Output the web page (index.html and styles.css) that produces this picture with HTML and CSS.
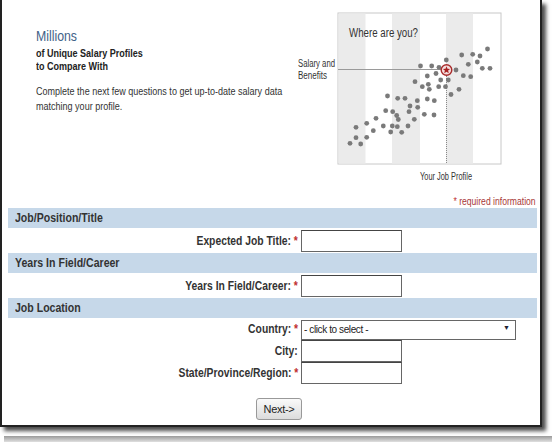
FILE: index.html
```html
<!doctype html>
<html lang="en">
<head>
    <meta charset="UTF-8" />
    <title>Salary Profile</title>
    <link rel="stylesheet" href="styles.css">
</head>
<body>
    <div class="panel">
        <div class="top">
            <div class="intro">
                <div class="intro-inner">
                    <div class="intro-title">Millions</div>
                    <div class="intro-sub">of Unique Salary Profiles<br>to Compare With</div>
                    <p class="intro-text">Complete the next few questions to get up-to-date salary data matching your profile.</p>
                </div>
            </div>
            <svg class="chart" width="220" height="190" viewBox="290 0 220 190">
                <rect x="338" y="13" width="163" height="151" fill="#fff" stroke="#c8c8c8" />
                <rect x="338.5" y="13.5" width="27" height="150" fill="#ebebeb" />
                <rect x="392" y="13.5" width="28" height="150" fill="#ebebeb" />
                <rect x="446" y="13.5" width="27" height="150" fill="#ebebeb" />
                <text x="349" y="37" class="chart-title" textLength="69" lengthAdjust="spacingAndGlyphs">Where are you?</text>
                <text x="298" y="67" class="chart-label" textLength="37" lengthAdjust="spacingAndGlyphs">Salary and</text>
                <text x="298" y="79" class="chart-label" textLength="29" lengthAdjust="spacingAndGlyphs">Benefits</text>
                <text x="420" y="180" class="chart-label" textLength="52" lengthAdjust="spacingAndGlyphs">Your Job Profile</text>
                <line x1="338" y1="69.5" x2="441" y2="69.5" stroke="#9a9a9a" stroke-width="1" />
                <line x1="446.5" y1="76" x2="446.5" y2="164" stroke="#888" stroke-width="1" stroke-dasharray="1 1" />
                <g fill="#7a7a7a">
                    <circle cx="487.5" cy="49" r="2.4" /><circle cx="472.7" cy="54.3" r="2.4" />
                    <circle cx="480" cy="56" r="2.4" /><circle cx="461.7" cy="55" r="2.4" />
                    <circle cx="477.3" cy="62" r="2.4" /><circle cx="468.3" cy="64.3" r="2.4" />
                    <circle cx="420.5" cy="66" r="2.4" /><circle cx="431.7" cy="66" r="2.4" />
                    <circle cx="439" cy="67.3" r="2.4" /><circle cx="446.3" cy="60" r="2.4" />
                    <circle cx="456" cy="70" r="2.4" /><circle cx="482.3" cy="68.3" r="2.4" />
                    <circle cx="490" cy="68.3" r="2.4" /><circle cx="427.3" cy="76" r="2.4" />
                    <circle cx="436" cy="73.5" r="2.4" /><circle cx="463.3" cy="75.7" r="2.4" />
                    <circle cx="470.7" cy="76.7" r="2.4" /><circle cx="440.7" cy="80" r="2.4" />
                    <circle cx="448.3" cy="80" r="2.4" /><circle cx="415" cy="81.7" r="2.4" />
                    <circle cx="422.3" cy="86.7" r="2.4" /><circle cx="428.3" cy="84.3" r="2.4" />
                    <circle cx="429.3" cy="89.3" r="2.4" /><circle cx="438.7" cy="86.7" r="2.4" />
                    <circle cx="445.5" cy="86.7" r="2.4" /><circle cx="459" cy="89.3" r="2.4" />
                    <circle cx="451" cy="94.5" r="2.4" /><circle cx="387.5" cy="96" r="2.4" />
                    <circle cx="397.7" cy="98.3" r="2.4" /><circle cx="405" cy="98.3" r="2.4" />
                    <circle cx="417.3" cy="100.7" r="2.4" /><circle cx="427.3" cy="99" r="2.4" />
                    <circle cx="434.3" cy="100.7" r="2.4" /><circle cx="410" cy="106" r="2.4" />
                    <circle cx="417.7" cy="107.3" r="2.4" /><circle cx="385.7" cy="110.7" r="2.4" />
                    <circle cx="392.7" cy="111.7" r="2.4" /><circle cx="409" cy="111.7" r="2.4" />
                    <circle cx="396.7" cy="115.5" r="2.4" /><circle cx="424.3" cy="114.3" r="2.4" />
                    <circle cx="434" cy="115" r="2.4" /><circle cx="376" cy="118.3" r="2.4" />
                    <circle cx="398.3" cy="119.5" r="2.4" /><circle cx="414.3" cy="119.3" r="2.4" />
                    <circle cx="366.7" cy="123.3" r="2.4" /><circle cx="356" cy="127.3" r="2.4" />
                    <circle cx="383.3" cy="126" r="2.4" /><circle cx="392.3" cy="126" r="2.4" />
                    <circle cx="397.3" cy="126.7" r="2.4" /><circle cx="408" cy="126" r="2.4" />
                    <circle cx="373.3" cy="130.7" r="2.4" /><circle cx="390.7" cy="132" r="2.4" />
                    <circle cx="401.7" cy="132.3" r="2.4" /><circle cx="356" cy="137.7" r="2.4" />
                    <circle cx="366.7" cy="137.3" r="2.4" /><circle cx="350" cy="143.3" r="2.4" />
                    <circle cx="360.7" cy="144" r="2.4" />
                </g>
                <circle cx="446.5" cy="70" r="5.3" fill="#f3dcdc" stroke="#a82a2a" stroke-width="1.4" />
                <polygon points="446.5,66.2 447.5,68.8 450.1,68.9 448.1,70.6 448.8,73.2 446.5,71.7 444.2,73.2 444.9,70.6 442.9,68.9 445.5,68.8" fill="#a82020" />
            </svg>
        </div>

        <div class="required"><span class="squeeze-r"><span class="star">*</span> required information</span></div>

        <div class="section-head"><span class="squeeze-l">Job/Position/Title</span></div>
        <div class="row">
            <label class="field-label"><span class="squeeze-r">Expected Job Title: <span class="star">*</span></span></label>
            <input type="text" class="text-input">
        </div>

        <div class="section-head"><span class="squeeze-l">Years In Field/Career</span></div>
        <div class="row">
            <label class="field-label"><span class="squeeze-r">Years In Field/Career: <span class="star">*</span></span></label>
            <input type="text" class="text-input">
        </div>

        <div class="section-head"><span class="squeeze-l">Job Location</span></div>
        <div class="row row-tight">
            <label class="field-label"><span class="squeeze-r">Country: <span class="star">*</span></span></label>
            <div class="select-wrap">
                <select class="select-input">
                    <option>- click to select -</option>
                </select>
                <span class="select-arrow">&#9660;</span>
            </div>
        </div>
        <div class="row row-tight">
            <label class="field-label"><span class="squeeze-r">City:</span></label>
            <input type="text" class="text-input">
        </div>
        <div class="row row-tight">
            <label class="field-label"><span class="squeeze-r">State/Province/Region: <span class="star">*</span></span></label>
            <input type="text" class="text-input">
        </div>

        <div class="actions">
            <button class="next-btn">Next-&gt;</button>
        </div>
    </div>
    <div class="reflection"></div>
</body>
</html>
```

FILE: styles.css
```css
html {
    background: #fff;
}
body {
    margin: 0;
    font-family: "Liberation Sans", Arial, sans-serif;
    color: #333;
}
.panel {
    width: 538px;
    height: 425px;
    border: 0 solid #222;
    border-width: 0 2px 2px 2px;
    background: #fff;
    box-shadow: 4px 4px 4px rgba(0, 0, 0, 0.7);
}
.top {
    display: flex;
    height: 195px;
}
.intro {
    flex: 0 0 254px;
    min-width: 0;
    padding-left: 34px;
}
.intro-inner {
    width: 312px;
    padding-top: 27px;
    transform: scaleX(0.82);
    transform-origin: left top;
}
.intro-title {
    font-size: 15px;
    line-height: 17px;
    color: #3f6288;
}
.intro-sub {
    font-size: 11px;
    font-weight: bold;
    line-height: 13px;
    color: #222;
    margin-top: 3px;
}
.intro-text {
    font-size: 11px;
    line-height: 15px;
    color: #333;
    margin: 11px 0 0 0;
}
.chart {
    display: block;
    flex: 0 0 220px;
}
.chart-title {
    font-size: 12px;
    fill: #333;
}
.chart-label {
    font-size: 10px;
    fill: #333;
}
.squeeze-r {
    display: inline-block;
    white-space: nowrap;
    transform: scaleX(0.86);
    transform-origin: right center;
}
.squeeze-l {
    display: inline-block;
    white-space: nowrap;
    transform: scaleX(0.88);
    transform-origin: left center;
}
.required {
    font-size: 10px;
    line-height: 13px;
    text-align: right;
    padding-right: 4px;
    color: #a83838;
}
.star {
    color: #c03030;
}
.section-head {
    margin: 0 3px 0 6px;
    height: 20px;
    line-height: 20px;
    padding-left: 7px;
    background: #c6d8e9;
    font-size: 12px;
    font-weight: bold;
    color: #333;
}
.row {
    display: grid;
    grid-template-columns: 296px 1fr;
    column-gap: 3px;
    align-items: center;
    height: 25px;
}
.row-tight {
    height: 22px;
}
.field-label {
    text-align: right;
    font-size: 12px;
    font-weight: bold;
    color: #333;
}
.text-input {
    box-sizing: border-box;
    width: 101px;
    height: 22px;
    border: 1px solid #666;
    border-top-color: #444;
    padding: 0 3px;
    margin: 0;
    font-size: 11px;
}
.select-wrap {
    position: relative;
    width: 215px;
    height: 20px;
}
.select-input {
    appearance: none;
    box-sizing: border-box;
    width: 215px;
    height: 20px;
    border: 1px solid #666;
    background: #fff;
    padding: 0 2px;
    margin: 0;
    font-family: inherit;
    font-size: 10px;
    letter-spacing: -0.4px;
    color: #222;
}
.select-arrow {
    position: absolute;
    right: 6px;
    top: 5px;
    font-size: 7px;
    color: #223;
}
.actions {
    display: flex;
    justify-content: center;
    padding: 14px 0 0 16px;
}
.next-btn {
    width: 46px;
    height: 22px;
    border: 1px solid #999;
    border-radius: 3px;
    background: linear-gradient(to bottom, #fafafa, #dcdcdc);
    font-family: inherit;
    font-size: 11px;
    letter-spacing: -0.3px;
    color: #222;
    padding: 0;
}
.reflection {
    margin: 9px 0 0 4px;
    height: 6px;
    background: linear-gradient(to bottom, #9a9a9a, #e0e0e0);
}
```
